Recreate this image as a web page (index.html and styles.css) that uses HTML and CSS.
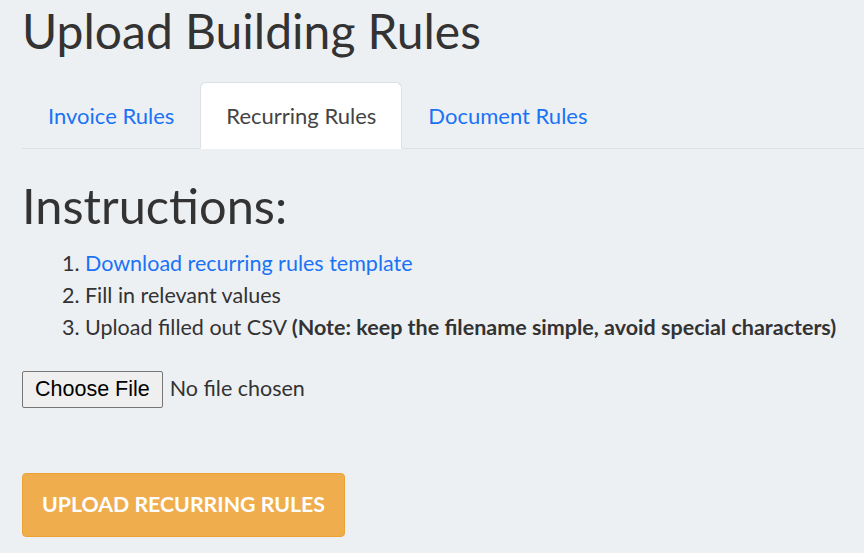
FILE: index.html
```html
<!DOCTYPE html>
<html lang="en">
<head>
    <meta charset="UTF-8">
    <meta name="viewport" content="width=device-width, initial-scale=1.0">
    <title>Upload Building Rules</title>
    <link rel="stylesheet" href="styles.css">
</head>
<body>
    <div class="container">
        <h1>Upload Building Rules</h1>

        <ul class="tabs">
            <li><a href="#" class="tab">Invoice Rules</a></li>
            <li><a href="#" class="tab active">Recurring Rules</a></li>
            <li><a href="#" class="tab">Document Rules</a></li>
        </ul>

        <div class="tab-content">
            <h2>Instructions:</h2>
            <ol class="steps">
                <li><a href="#">Download recurring rules template</a></li>
                <li>Fill in relevant values</li>
                <li>Upload filled out CSV <strong>(Note: keep the filename simple, avoid special characters)</strong></li>
            </ol>

            <div class="file-row">
                <input type="file" id="csvFile" accept=".csv">
            </div>

            <button class="upload-btn">Upload Recurring Rules</button>
        </div>
    </div>
</body>
</html>
```

FILE: styles.css
```css
body {
    font-family: Lato, "Noto Sans", sans-serif;
    margin: 0;
    background-color: #edf0f3;
    color: #333;
    font-size: 21.5px;
    line-height: 32px;
}
.container {
    padding: 2px 0 0 22px;
}
h1, h2 {
    font-weight: 400;
    font-size: 48px;
    line-height: 1.2;
    margin: 0;
}
h1 {
    margin-bottom: 22px;
}
h2 {
    font-size: 48.7px;
    margin-top: 27px;
    margin-bottom: 13px;
}
a {
    color: #1a73f5;
    text-decoration: none;
}
.tabs {
    list-style: none;
    display: flex;
    margin: 0;
    padding: 0;
    border-bottom: 1px solid #dcdfe3;
}
.tab {
    display: block;
    font-size: 22px;
    padding: 18px 25px 17px;
    line-height: 30px;
    border: 1px solid transparent;
    border-radius: 6px 6px 0 0;
    margin-bottom: -1px;
}
.tab.active {
    background-color: #fff;
    color: #444;
    border-color: #dcdfe3 #dcdfe3 #fff;
}
.steps {
    margin: 0 0 28px;
    padding-left: 63px;
}
.steps strong {
    font-weight: 700;
}
.file-row {
    margin-bottom: 65px;
}
.file-row input {
    font-family: Lato, sans-serif;
    font-size: 21.5px;
    color: #333;
}
.file-row input::file-selector-button {
    font-family: "Liberation Sans", Arial, sans-serif;
    font-size: 21.5px;
    color: #000;
    background-color: #efefef;
    border: 1px solid #767676;
    border-radius: 2px;
    padding: 5px 12px;
    margin-right: 7px;
}
.upload-btn {
    font-family: Lato, sans-serif;
    font-size: 21.3px;
    font-weight: 700;
    line-height: 33px;
    text-transform: uppercase;
    color: #fff;
    background-color: #f0ad4e;
    border: 1px solid #eea236;
    border-radius: 4px;
    padding: 14px 19px 15px;
    cursor: pointer;
}
```
